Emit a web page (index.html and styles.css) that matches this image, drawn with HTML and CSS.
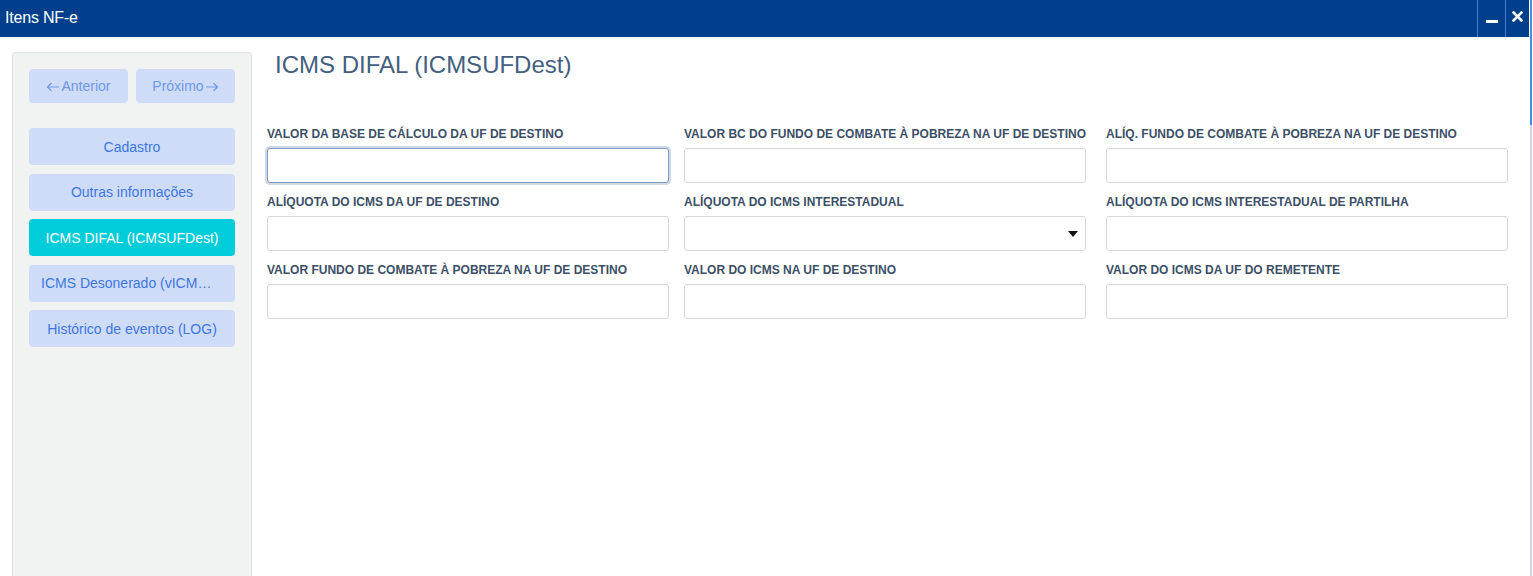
FILE: index.html
```html
<!DOCTYPE html>
<html lang="pt-BR">
<head>
	<meta charset="utf-8" />
	<title>Itens NF-e</title>
	<link rel="stylesheet" href="styles.css">
</head>
<body>
	<div class="screen">
		<div class="window">
			<header class="titlebar">
				<span class="titlebar-text">Itens NF-e</span>
				<div class="titlebar-buttons">
					<button class="tb-btn" title="Minimizar"><span class="tb-min"></span></button>
					<button class="tb-btn tb-close" title="Fechar">
						<svg width="11" height="11" viewBox="0 0 11 11">
							<path d="M1.5 1.5 L9.5 9.5 M9.5 1.5 L1.5 9.5" stroke="#fff" stroke-width="2.6" stroke-linecap="square" fill="none"/>
						</svg>
					</button>
				</div>
			</header>

			<div class="window-body">
				<aside class="sidebar">
					<div class="pager">
						<button class="side-btn pager-btn">
							<svg class="arrow" width="14" height="10" viewBox="0 0 14 10"><path d="M13 5 H1.5 M5.5 1 L1.5 5 L5.5 9" stroke="currentColor" stroke-width="1.2" fill="none"/></svg>Anterior
						</button>
						<button class="side-btn pager-btn">
							Próximo<svg class="arrow" width="14" height="10" viewBox="0 0 14 10"><path d="M1 5 H12.5 M8.5 1 L12.5 5 L8.5 9" stroke="currentColor" stroke-width="1.2" fill="none"/></svg>
						</button>
					</div>
					<nav class="menu">
						<button class="side-btn">Cadastro</button>
						<button class="side-btn">Outras informações</button>
						<button class="side-btn active">ICMS DIFAL (ICMSUFDest)</button>
						<button class="side-btn clip" title="ICMS Desonerado (vICMSDeson)">ICMS Desonerado (vICM…</button>
						<button class="side-btn">Histórico de eventos (LOG)</button>
					</nav>
				</aside>

				<main class="content">
					<h2 class="page-title">ICMS DIFAL (ICMSUFDest)</h2>

					<div class="form-grid">
						<div class="field">
							<label>Valor da base de cálculo da UF de destino</label>
							<input type="text" class="input focused">
						</div>
						<div class="field">
							<label>Valor BC do fundo de combate à pobreza na UF de destino</label>
							<input type="text" class="input">
						</div>
						<div class="field">
							<label>Alíq. fundo de combate à pobreza na UF de destino</label>
							<input type="text" class="input">
						</div>

						<div class="field">
							<label>Alíquota do ICMS da UF de destino</label>
							<input type="text" class="input">
						</div>
						<div class="field">
							<label>Alíquota do ICMS interestadual</label>
							<div class="input select"><span class="caret"></span></div>
						</div>
						<div class="field">
							<label>Alíquota do ICMS interestadual de partilha</label>
							<input type="text" class="input">
						</div>

						<div class="field">
							<label>Valor fundo de combate à pobreza na UF de destino</label>
							<input type="text" class="input">
						</div>
						<div class="field">
							<label>Valor do ICMS na UF de destino</label>
							<input type="text" class="input">
						</div>
						<div class="field">
							<label>Valor do ICMS da UF do remetente</label>
							<input type="text" class="input">
						</div>
					</div>
				</main>
			</div>
		</div>
		<div class="edge"></div>
	</div>
</body>
</html>
```

FILE: styles.css
```css
html, body {
	margin: 0;
	height: 100%;
	overflow: hidden;
}
body {
	font-family: "Liberation Sans", Arial, sans-serif;
	background: #fff;
}
/*-------------------*/
.screen {
	display: flex;
	height: 576px;
}
.window {
	width: 1529px;
	display: flex;
	flex-direction: column;
}
.edge {
	width: 2px;
	margin-left: 1px;
	background: linear-gradient(to bottom, #4b8fdc 0, #4b8fdc 125px, #cfd5dc 125px, #cfd5dc 100%);
}
/*-------------------*/
.titlebar {
	height: 37px;
	background: #013f8c;
	display: flex;
	align-items: center;
	justify-content: space-between;
}
.titlebar-text {
	color: #fff;
	font-size: 16px;
	padding-left: 5px;
	padding-bottom: 1px;
	letter-spacing: -0.2px;
}
.titlebar-buttons {
	display: flex;
	height: 100%;
}
.tb-btn {
	width: 28px;
	height: 37px;
	border: 0;
	border-left: 1px solid #4a7ccc;
	background: transparent;
	padding: 0;
	display: flex;
	align-items: center;
	justify-content: center;
}
.tb-btn.tb-close {
	width: 24px;
}
.tb-btn svg {
	margin-top: -5px;
}
.tb-min {
	display: block;
	width: 12px;
	height: 3px;
	background: #fff;
	margin-top: 5px;
}
/*-------------------*/
.window-body {
	flex: 1;
	display: flex;
	padding: 15px 0 0 12px;
	min-height: 0;
}
.sidebar {
	width: 206px;
	padding: 16px;
	background: #f1f3f3;
	border: 1px solid #dfe2e2;
	border-bottom: 0;
	border-radius: 4px 4px 0 0;
}
.pager {
	display: flex;
	gap: 8px;
}
.side-btn {
	font-family: "Liberation Sans", Arial, sans-serif;
	font-size: 14px;
	height: 37px;
	border: 0;
	border-radius: 4px;
	background: #cedcf8;
	color: #3e76e0;
	padding: 0 10px;
	white-space: nowrap;
	overflow: hidden;
	width: 100%;
}
.pager-btn {
	width: 99px;
	height: 34px;
	color: #6f97ea;
	padding: 0;
	display: flex;
	align-items: center;
	justify-content: center;
	gap: 1px;
}
.arrow {
	display: block;
	margin-top: 1px;
}
.menu {
	margin-top: 25px;
	display: flex;
	flex-direction: column;
	gap: 8.5px;
}
.side-btn.active {
	background: #00cdd9;
	color: #fff;
}
.side-btn.clip {
	text-align: left;
	padding: 0 12px;
}
/*-------------------*/
.content {
	flex: 1;
	padding: 0 0 0 15px;
}
.page-title {
	margin: -1px 0 48px 8px;
	font-size: 24px;
	line-height: 28px;
	font-weight: normal;
	color: #43607f;
}
.form-grid {
	display: grid;
	grid-template-columns: 417px 422px 402px;
	row-gap: 12px;
}
.field label {
	display: block;
	font-size: 12px;
	line-height: 14px;
	font-weight: bold;
	text-transform: uppercase;
	color: #3c4f67;
	margin-bottom: 7px;
	white-space: nowrap;
}
.input {
	display: block;
	box-sizing: border-box;
	width: 402px;
	height: 35px;
	margin: 0;
	border: 1px solid #d4d7db;
	border-radius: 3px;
	background: #fff;
	font-family: "Liberation Sans", Arial, sans-serif;
	font-size: 14px;
	padding: 0 8px;
	outline: none;
}
.input.focused {
	border-color: #7c9ac2;
	box-shadow: 0 0 0 2px #d3d9e1;
}
.select {
	display: flex;
	align-items: center;
	justify-content: flex-end;
	padding-right: 7px;
}
.caret {
	width: 0;
	height: 0;
	border-left: 5.5px solid transparent;
	border-right: 5.5px solid transparent;
	border-top: 6px solid #111;
	margin-top: 1px;
}
```
